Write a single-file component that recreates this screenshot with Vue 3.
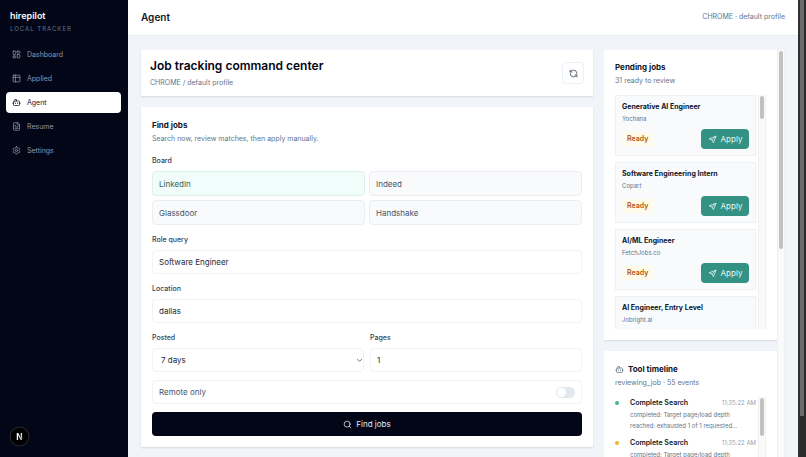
<script setup>
import { ref } from 'vue'

const nav = [
  { label: 'Dashboard', icon: 'dashboard' },
  { label: 'Applied', icon: 'table' },
  { label: 'Agent', icon: 'bot' },
  { label: 'Resume', icon: 'file' },
  { label: 'Settings', icon: 'settings' },
]
const active = ref('Agent')

const boards = ['LinkedIn', 'Indeed', 'Glassdoor', 'Handshake']
const board = ref('LinkedIn')
const role = ref('Software Engineer')
const location = ref('dallas')
const posted = ref('7 days')
const pages = ref('1')
const remote = ref(false)

const jobs = [
  { title: 'Generative AI Engineer', company: 'Yochana' },
  { title: 'Software Engineering Intern', company: 'Copart' },
  { title: 'AI/ML Engineer', company: 'FetchJobs.co' },
  { title: 'AI Engineer, Entry Level', company: 'Jobright.ai' },
]

const events = [
  { tone: 'green', title: 'Complete Search', time: '11:35:22 AM', lines: ['completed: Target page/load depth', 'reached: exhausted 1 of 1 requested…'] },
  { tone: 'amber', title: 'Complete Search', time: '11:35:22 AM', lines: ['completed: Target page/load depth', 'reached: exhausted 1 of 1 requested…'] },
]
</script>

<template>
  <div class="app">
    <aside class="sidebar">
      <div class="brand">hirepilot</div>
      <div class="tagline">LOCAL TRACKER</div>
      <nav class="nav">
        <a v-for="n in nav" :key="n.label" href="#" class="nav-item" :class="{ active: n.label === active }" @click.prevent="active = n.label">
          <svg class="icon" viewBox="0 0 24 24" aria-hidden="true">
            <template v-if="n.icon === 'dashboard'">
              <rect x="3" y="3" width="7" height="9" rx="1" /><rect x="14" y="3" width="7" height="5" rx="1" />
              <rect x="14" y="12" width="7" height="9" rx="1" /><rect x="3" y="16" width="7" height="5" rx="1" />
            </template>
            <template v-else-if="n.icon === 'table'">
              <rect x="3" y="3" width="18" height="18" rx="2" /><path d="M3 9h18M9 3v18" />
            </template>
            <template v-else-if="n.icon === 'bot'">
              <path d="M12 8V4H8" /><rect x="4" y="8" width="16" height="12" rx="2" /><path d="M2 14h2M20 14h2M15 13v2M9 13v2" />
            </template>
            <template v-else-if="n.icon === 'file'">
              <path d="M15 2H6a2 2 0 0 0-2 2v16a2 2 0 0 0 2 2h12a2 2 0 0 0 2-2V7Z" /><path d="M14 2v4a2 2 0 0 0 2 2h4M10 9H8M16 13H8M16 17H8" />
            </template>
            <template v-else>
              <path d="M12.22 2h-.44a2 2 0 0 0-2 2v.18a2 2 0 0 1-1 1.73l-.43.25a2 2 0 0 1-2 0l-.15-.08a2 2 0 0 0-2.73.73l-.22.38a2 2 0 0 0 .73 2.73l.15.1a2 2 0 0 1 1 1.72v.51a2 2 0 0 1-1 1.74l-.15.09a2 2 0 0 0-.73 2.73l.22.38a2 2 0 0 0 2.73.73l.15-.08a2 2 0 0 1 2 0l.43.25a2 2 0 0 1 1 1.73V20a2 2 0 0 0 2 2h.44a2 2 0 0 0 2-2v-.18a2 2 0 0 1 1-1.73l.43-.25a2 2 0 0 1 2 0l.15.08a2 2 0 0 0 2.73-.73l.22-.39a2 2 0 0 0-.73-2.73l-.15-.08a2 2 0 0 1-1-1.74v-.5a2 2 0 0 1 1-1.74l.15-.09a2 2 0 0 0 .73-2.73l-.22-.38a2 2 0 0 0-2.73-.73l-.15.08a2 2 0 0 1-2 0l-.43-.25a2 2 0 0 1-1-1.73V4a2 2 0 0 0-2-2z" />
              <circle cx="12" cy="12" r="3" />
            </template>
          </svg>
          <span>{{ n.label }}</span>
        </a>
      </nav>
    </aside>

    <div class="page">
      <header class="topbar">
        <h1>Agent</h1>
        <span>CHROME · default profile</span>
      </header>

      <main class="content">
        <div class="left">
          <section class="card hero">
            <div>
              <h2>Job tracking command center</h2>
              <p>CHROME / default profile</p>
            </div>
            <button type="button" class="refresh" aria-label="Refresh">
              <svg class="icon" viewBox="0 0 24 24" aria-hidden="true">
                <path d="M21 12a9 9 0 0 0-9-9 9.75 9.75 0 0 0-6.74 2.74L3 8" /><path d="M3 3v5h5" />
                <path d="M3 12a9 9 0 0 0 9 9 9.75 9.75 0 0 0 6.74-2.74L21 16" /><path d="M16 16h5v5" />
              </svg>
            </button>
          </section>

          <form class="card find" @submit.prevent>
            <div class="head">
              <h3>Find jobs</h3>
              <p>Search now, review matches, then apply manually.</p>
            </div>
            <div class="field">
              <span id="board-label" class="label">Board</span>
              <div class="boards" role="group" aria-labelledby="board-label">
                <button v-for="b in boards" :key="b" type="button" class="board" :class="{ on: b === board }" :aria-pressed="b === board" @click="board = b">{{ b }}</button>
              </div>
            </div>
            <div class="field">
              <label class="label" for="role">Role query</label>
              <input id="role" v-model="role" class="control" type="text" />
            </div>
            <div class="field">
              <label class="label" for="location">Location</label>
              <input id="location" v-model="location" class="control" type="text" />
            </div>
            <div class="pair">
              <div class="field">
                <label class="label" for="posted">Posted</label>
                <div class="select">
                  <select id="posted" v-model="posted" class="control">
                    <option>7 days</option>
                  </select>
                  <svg class="icon" viewBox="0 0 24 24" aria-hidden="true"><path d="m5 8 7 7 7-7" /></svg>
                </div>
              </div>
              <div class="field">
                <label class="label" for="pages">Pages</label>
                <input id="pages" v-model="pages" class="control" type="text" inputmode="numeric" />
              </div>
            </div>
            <label class="remote" for="remote">
              <span>Remote only</span>
              <input id="remote" v-model="remote" type="checkbox" role="switch" class="switch" />
            </label>
            <button type="submit" class="submit">
              <svg class="icon" viewBox="0 0 24 24" aria-hidden="true"><circle cx="11" cy="11" r="8" /><path d="m21 21-4.3-4.3" /></svg>
              <span>Find jobs</span>
            </button>
          </form>
        </div>

        <div class="right">
          <div class="stack">
            <section class="card pending">
              <h3>Pending jobs</h3>
              <p>31 ready to review</p>
              <div class="scroller jobs">
                <div class="items">
                  <article v-for="j in jobs" :key="j.title" class="job">
                    <h4>{{ j.title }}</h4>
                    <div class="company">{{ j.company }}</div>
                    <div class="actions">
                      <span class="badge">Ready</span>
                      <button type="button" class="apply">
                        <svg class="icon" viewBox="0 0 24 24" aria-hidden="true">
                          <path d="M3.7 9.9 21.5 3 14.4 20.8 11 13.5Z" /><path d="M21.2 3.2 11 13.5" />
                        </svg>
                        <span>Apply</span>
                      </button>
                    </div>
                  </article>
                </div>
                <div class="track"><div class="thumb short"></div></div>
              </div>
            </section>

            <section class="card timeline">
              <div class="title-row">
                <svg class="icon" viewBox="0 0 24 24" aria-hidden="true">
                  <path d="M12 8V4H8" /><rect x="4" y="8" width="16" height="12" rx="2" /><path d="M2 14h2M20 14h2M15 13v2M9 13v2" />
                </svg>
                <h3>Tool timeline</h3>
              </div>
              <p>reviewing_job · 55 events</p>
              <div class="scroller log">
                <ul class="items">
                  <li v-for="(e, i) in events" :key="i" class="event">
                    <span class="dot" :class="e.tone"></span>
                    <div class="event-body">
                      <div class="event-head"><strong>{{ e.title }}</strong><time>{{ e.time }}</time></div>
                      <div v-for="l in e.lines" :key="l" class="detail">{{ l }}</div>
                    </div>
                  </li>
                </ul>
                <div class="track"><div class="thumb medium"></div></div>
              </div>
            </section>
          </div>
          <div class="track outer"><div class="thumb long"></div></div>
        </div>
      </main>
    </div>

    <div class="window-track"><div class="window-thumb"></div></div>

    <button type="button" class="devtools" aria-label="Developer tools">
      <svg viewBox="0 0 20 20" aria-hidden="true">
        <defs>
          <linearGradient id="fade" x1="0" y1="0" x2="1" y2="1"><stop offset="0.4" stop-color="#fff" /><stop offset="1" stop-color="#777" /></linearGradient>
        </defs>
        <circle cx="10" cy="10" r="9" fill="#000" stroke="#25262c" />
        <text x="10" y="13" text-anchor="middle" fill="url(#fade)">N</text>
      </svg>
    </button>
  </div>
</template>

<style>
body {
  background: #f1f5f9;
}
</style>

<style scoped>
.app,
.app * {
  box-sizing: border-box;
}
.app {
  display: grid;
  grid-template-columns: 128px minmax(0, 1fr) 8px;
  height: 100vh;
  overflow: hidden;
  font-family: Inter, "Liberation Sans", sans-serif;
  font-size: 8px;
  color: #0f172a;
  background: #f1f5f9;
}
h1, h2, h3, h4, p, ul {
  margin: 0;
  padding: 0;
  list-style: none;
}
button, input, select {
  font: inherit;
  color: inherit;
  margin: 0;
}
.icon {
  width: 9px;
  height: 9px;
  flex: none;
  fill: none;
  stroke: currentColor;
  stroke-width: 2;
  stroke-linecap: round;
  stroke-linejoin: round;
}
.sidebar {
  background: #020617;
  padding: 9px 7px 0 6px;
}
.brand {
  padding-left: 4px;
  font-size: 9px;
  font-weight: 600;
  line-height: 14px;
  color: #f8fafc;
}
.tagline {
  padding-left: 4px;
  font-size: 6px;
  letter-spacing: 1px;
  line-height: 12px;
  color: #64748b;
}
.nav {
  display: flex;
  flex-direction: column;
  gap: 3px;
  padding-top: 9px;
}
.nav-item {
  display: flex;
  align-items: center;
  gap: 6px;
  height: 21px;
  padding: 0 6px;
  border-radius: 4px;
  font-size: 7px;
  color: #8b98ab;
  text-decoration: none;
}
.nav-item.active {
  background: #fff;
  color: #0f172a;
}
.page {
  display: flex;
  flex-direction: column;
  min-width: 0;
  min-height: 0;
}
.topbar {
  display: flex;
  flex: none;
  align-items: center;
  justify-content: space-between;
  height: 36px;
  padding: 0 13px 2px;
  background: #fff;
  border-bottom: 1px solid #e8edf3;
}
.topbar h1 {
  font-size: 10px;
  font-weight: 600;
}
.topbar span {
  font-size: 7px;
  color: #64748b;
}
.content {
  display: grid;
  flex: 1;
  grid-template-columns: minmax(0, 1fr) 181px;
  gap: 11px;
  min-height: 0;
  padding: 14px 13px 0;
}
.left {
  display: flex;
  flex-direction: column;
  gap: 11px;
}
.card {
  background: #fff;
  border-radius: 1px;
  box-shadow: 0 1px 2px rgba(15, 23, 42, 0.12);
}
.card p {
  font-size: 7px;
  line-height: 14px;
  color: #64748b;
}
.hero {
  display: flex;
  align-items: center;
  justify-content: space-between;
  padding: 6px 9px;
}
.hero h2 {
  font-size: 12px;
  font-weight: 600;
  line-height: 20px;
  color: #020617;
}
.refresh {
  display: grid;
  place-items: center;
  width: 22px;
  height: 22px;
  padding: 0;
  background: #fff;
  border: 1px solid #edf0f5;
  border-radius: 4px;
  color: #334155;
}
.find {
  display: flex;
  flex-direction: column;
  gap: 8px;
  padding: 11px;
}
h3 {
  font-size: 8px;
  font-weight: 700;
  line-height: 14px;
}
.field {
  display: flex;
  flex-direction: column;
  gap: 3px;
}
.label {
  font-size: 7px;
  font-weight: 500;
  line-height: 14px;
  color: #334155;
}
.boards {
  display: grid;
  grid-template-columns: 1fr 1fr;
  gap: 4px;
}
.board {
  height: 25px;
  padding: 0 6px;
  text-align: left;
  background: #f8fafc;
  border: 1px solid #eaeef3;
  border-radius: 4px;
  color: #475569;
}
.board.on {
  background: #f0fdfa;
  border-color: #dcf3ec;
  color: #33645d;
}
.control {
  width: 100%;
  height: 24px;
  padding: 0 6px;
  background: #fff;
  border: 1px solid #f0f3f7;
  border-radius: 4px;
  color: #1e293b;
}
.pair {
  display: grid;
  grid-template-columns: 1fr 1fr;
  gap: 6px;
}
.select {
  display: grid;
  align-items: center;
}
.select > * {
  grid-area: 1 / 1;
}
.select .control {
  appearance: none;
  padding: 0 8px;
}
.select .icon {
  justify-self: end;
  width: 7px;
  height: 7px;
  margin-right: 1px;
  pointer-events: none;
}
.remote {
  display: flex;
  align-items: center;
  justify-content: space-between;
  height: 24px;
  padding: 0 6px;
  border: 1px solid #f0f3f7;
  border-radius: 4px;
  color: #475569;
}
.switch {
  display: flex;
  appearance: none;
  width: 19px;
  height: 11px;
  padding: 1px;
  border-radius: 6px;
  background: #e2e8f0;
}
.switch::before {
  content: "";
  width: 9px;
  height: 9px;
  border-radius: 50%;
  background: #fff;
}
.switch:checked {
  justify-content: flex-end;
  background: #0d9488;
}
.submit {
  display: flex;
  align-items: center;
  justify-content: center;
  gap: 4px;
  height: 24px;
  border: 0;
  border-radius: 4px;
  background: #020617;
  color: #e8ebf0;
}
.right {
  display: grid;
  grid-template-columns: minmax(0, 1fr) 8px;
  min-height: 0;
  overflow: hidden;
}
.stack {
  display: flex;
  flex-direction: column;
  gap: 11px;
  min-height: 0;
}
.pending,
.timeline {
  flex: none;
  padding: 10px 11px 11px;
}
.scroller {
  display: grid;
  grid-template-columns: minmax(0, 1fr) 8px;
  gap: 2px;
  margin-top: 7px;
  overflow: hidden;
}
.jobs {
  height: 234px;
}
.log {
  height: 160px;
}
.items {
  display: flex;
  flex-direction: column;
  gap: 6px;
}
.track {
  padding: 1px;
  background: #fafafb;
  border: 0 solid #eff0f2;
  border-width: 0 1px;
}
.thumb {
  border-radius: 2px;
  background: #c1c1c1;
}
.short {
  height: 23px;
}
.medium {
  height: 38px;
}
.long {
  height: 49%;
}
.job {
  flex: none;
  padding: 5px 6px 6px;
  background: #f8fafc;
  border: 1px solid #edf0f4;
}
.job h4 {
  font-size: 7px;
  font-weight: 700;
  line-height: 12px;
}
.company {
  font-size: 6px;
  line-height: 12px;
  color: #64748b;
}
.actions {
  display: flex;
  align-items: center;
  justify-content: space-between;
  margin-top: 4px;
}
.badge {
  padding: 0 5px;
  border-radius: 4px;
  background: #fffbeb;
  font-size: 7px;
  font-weight: 600;
  line-height: 14px;
  color: #b45309;
}
.apply {
  display: flex;
  align-items: center;
  justify-content: center;
  gap: 4px;
  width: 48px;
  height: 20px;
  padding: 0;
  border: 0;
  border-radius: 4px;
  background: #339284;
  color: #e9f7f4;
}
.timeline {
  padding-top: 11px;
}
.title-row {
  display: flex;
  align-items: center;
  gap: 4px;
}
.title-row .icon {
  color: #64748b;
}
.event {
  display: flex;
  gap: 11px;
}
.dot {
  flex: none;
  width: 4px;
  height: 4px;
  margin-top: 4px;
  border-radius: 50%;
}
.green {
  background: #3fb98f;
}
.amber {
  background: #f2b32e;
}
.event-body {
  flex: 1;
  min-width: 0;
}
.event-head {
  display: flex;
  align-items: center;
  justify-content: space-between;
  line-height: 12px;
}
.event-head strong {
  font-size: 7px;
  font-weight: 600;
}
.event-head time {
  font-size: 6px;
  color: #94a3b8;
}
.detail {
  font-size: 6px;
  line-height: 11px;
  color: #64748b;
  white-space: nowrap;
}
.window-track {
  padding-right: 2px;
  background: #2b2b2b;
  border-left: 2px solid #303030;
}
.window-thumb {
  height: 91%;
  background: #6b6b6b;
}
.devtools {
  position: fixed;
  bottom: 10px;
  left: 9px;
  width: 21px;
  height: 21px;
  padding: 0;
  border: 0;
  background: none;
}
.devtools svg {
  display: block;
}
.devtools text {
  font-size: 8px;
  font-weight: 700;
}
</style>
